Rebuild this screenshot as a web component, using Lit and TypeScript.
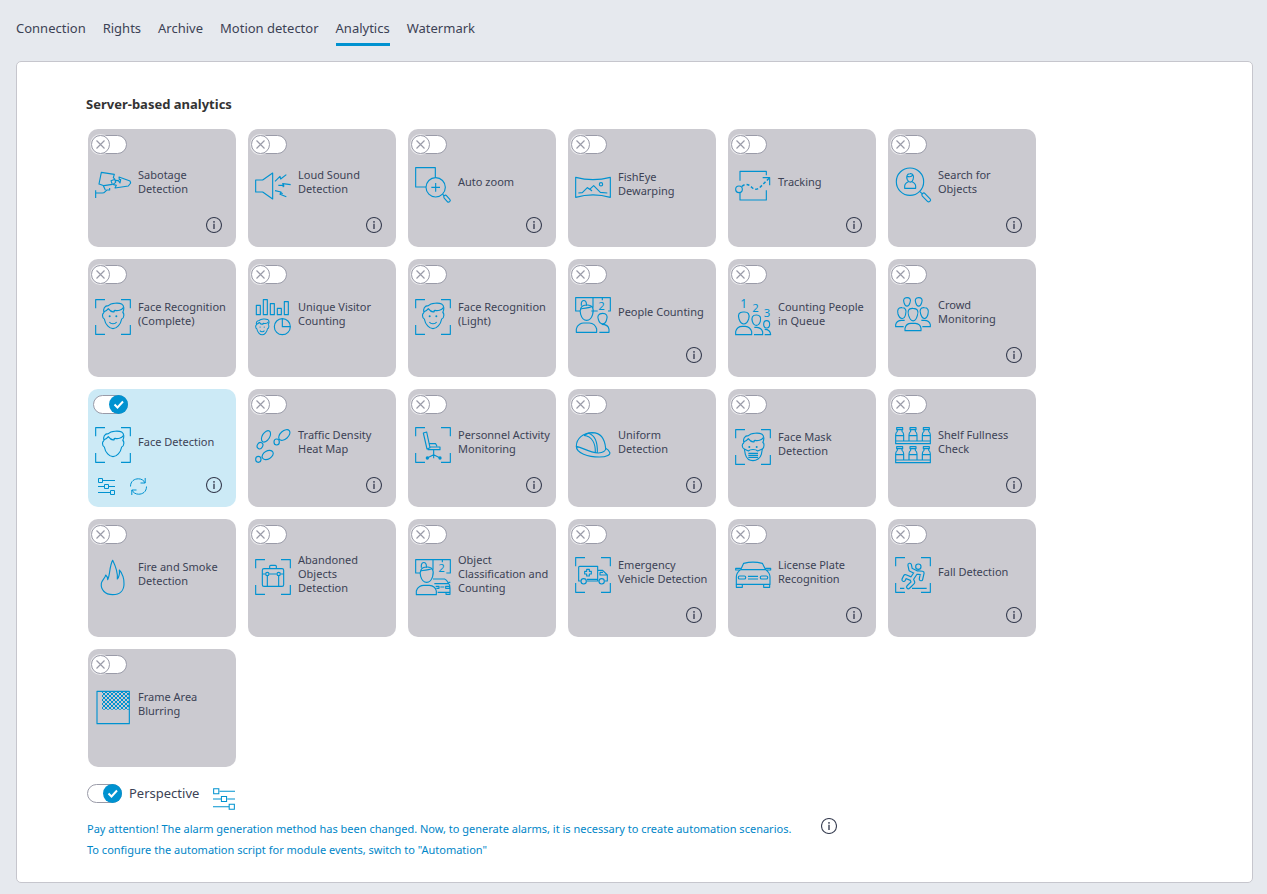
import { LitElement, html, svg, css, nothing } from "lit";
import type { SVGTemplateResult } from "lit";
import { customElement, property, state } from "lit/decorators.js";
import { classMap } from "lit/directives/class-map.js";

type Module = {
  id: string;
  label: string;
  info?: boolean;
  on?: boolean;
};

const TABS = ["Connection", "Rights", "Archive", "Motion detector", "Analytics", "Watermark"];

const MODULES: Module[] = [
  { id: "sabotage", label: "Sabotage\nDetection", info: true },
  { id: "sound", label: "Loud Sound\nDetection", info: true },
  { id: "zoom", label: "Auto zoom", info: true },
  { id: "fisheye", label: "FishEye\nDewarping" },
  { id: "tracking", label: "Tracking", info: true },
  { id: "search", label: "Search for\nObjects", info: true },
  { id: "face", label: "Face Recognition\n(Complete)" },
  { id: "visitor", label: "Unique Visitor\nCounting" },
  { id: "face", label: "Face Recognition\n(Light)" },
  { id: "people", label: "People Counting", info: true },
  { id: "queue", label: "Counting People\nin Queue" },
  { id: "crowd", label: "Crowd\nMonitoring", info: true },
  { id: "head", label: "Face Detection", info: true, on: true },
  { id: "traffic", label: "Traffic Density\nHeat Map", info: true },
  { id: "chair", label: "Personnel Activity\nMonitoring", info: true },
  { id: "helmet", label: "Uniform\nDetection", info: true },
  { id: "mask", label: "Face Mask\nDetection" },
  { id: "shelf", label: "Shelf Fullness\nCheck", info: true },
  { id: "fire", label: "Fire and Smoke\nDetection" },
  { id: "bag", label: "Abandoned\nObjects\nDetection" },
  { id: "objects", label: "Object\nClassification and\nCounting" },
  { id: "ambulance", label: "Emergency\nVehicle Detection", info: true },
  { id: "car", label: "License Plate\nRecognition", info: true },
  { id: "fall", label: "Fall Detection", info: true },
  { id: "blur", label: "Frame Area\nBlurring" },
];

const brackets = svg`<path d="M2 28V2H30M78 2H106V28M106 78V106H78M30 106H2V78"/>`;

const hairShape = svg`
  <path d="M27 42C23 30 29 20 40 20C48 11 72 11 80 15C88 20 88 32 83 41"/>
  <path d="M27 38C33 36 37 33 40 29C45 36 52 40 58 38C56 36 57 34 60 34C68 36 80 34 85 26"/>`;

const headShape = svg`${hairShape}
  <path d="M27 42C21 42 21 58 28 60C31 77 43 89 54 89C65 89 77 77 80 60C88 58 88 42 83 41"/>`;

const faceShape = svg`${headShape}
  <circle class="dot" cx="44" cy="52" r="3"/><circle class="dot" cx="64" cy="52" r="3"/>
  <path d="M43 69C48 76 60 76 65 69"/>`;

const bottle = (x: number, y: number) => svg`<g transform="translate(${x} ${y})">
  <path d="M-9 0H9V6H-9ZM-7 6V11C-11 14-12 17-12 22V40M7 6V11C11 14 12 17 12 22V40M-12 24H12"/></g>`;

const GLYPHS: Record<string, SVGTemplateResult> = {
  sabotage: svg`
    <path d="M19 16L58 22L55 32L60 37L48 41L52 52L27 56L12 51Z"/>
    <path d="M72 30L105 42L107 48L100 57L60 63L64 55L54 52L62 46L60 40L70 41L75 48L77 38L73 38Z"/>
    <path d="M2 70V93M2 78H22C30 78 31 71 36 69H44V63M25 56L31 69"/>`,
  sound: svg`
    <path d="M2 39H23L53 18V96L23 75H2ZM53 18V96"/>
    <path d="M60 43L75 28L77 36L94 23M70 55H86L83 50L107 53M83 60L88 56M60 71L78 75L75 82L94 89M75 75L83 80"/>`,
  zoom: svg`
    <path d="M33 60H2V2H61V31"/><circle cx="62" cy="61" r="29"/>
    <path d="M49 61H75M62 48V74M83 82L88 87"/>
    <rect x="84" y="90" width="24" height="10" rx="5" transform="rotate(48 96 95)"/>`,
  fisheye: svg`
    <path d="M2 25Q54 39 106 25V85Q54 70 2 85Z"/>
    <path d="M10 72L22 71L37 56L44 60L51 66M37 56L44 61L56 50L76 70L97 72"/><circle cx="78" cy="46" r="5"/>`,
  tracking: svg`
    <path d="M15 41V13H94V25M15 77V99H94V70"/><circle cx="12" cy="67" r="10"/>
    <path class="bold" d="M21 58C32 48 42 53 50 61C58 69 68 68 76 60L102 34" stroke-dasharray="9 6"/>
    <path d="M83 32H104V55"/>`,
  search: svg`
    <circle cx="45" cy="44" r="41"/>
    <path d="M45 20C34 20 34 31 37 38C42 48 51 48 54 38C58 28 54 19 45 20ZM37 28C44 30 51 28 53 24"/>
    <path d="M40 44C33 47 29 49 29 58V64H62V58C62 49 58 47 51 44M75 74L81 80"/>
    <rect x="78" y="86" width="32" height="11" rx="5" transform="rotate(46 94 91)"/>`,
  face: svg`${brackets}${faceShape}`,
  head: svg`${brackets}${headShape}`,
  visitor: svg`
    <path d="M4 19H16V47H4ZM25 2H37V47H25ZM46 14H58V47H46ZM67 28H79V47H67ZM88 8H100V47H88Z"/>
    <g transform="translate(-12 52) scale(.62)" stroke-width="5">${faceShape}</g>
    <circle cx="82" cy="83" r="24"/><path d="M82 59V83H106"/>`,
  people: svg`
    <path d="M15 42H2V2H106V42H99M54 2V32M82 2V10M19 26V18C21 8 32 8 34 18V26M49 42H68"/>
    <text x="70" y="40" font-size="34">2</text>
    <path d="M35 24C17 24 13 38 17 52C24 76 46 76 53 52C58 34 52 23 35 24Z"/>
    <path d="M17 36C30 32 42 35 52 28"/>
    <path d="M4 106V96C7 82 20 78 26 78H43C56 79 62 86 65 96V106Z"/>
    <path d="M83 49C70 49 66 58 70 67C75 85 91 85 95 67C99 56 94 49 83 49ZM80 82C96 82 101 89 102 97V106H73"/>`,
  queue: svg`
    <text x="16" y="26" font-size="36">1</text><text x="52" y="39" font-size="34">2</text><text x="86" y="55" font-size="34">3</text>
    <path d="M26 39C11 38 8 48 12 60C19 80 34 80 41 60C45 46 40 38 26 39Z"/>
    <path d="M2 107V98C5 85 16 82 22 82H31C43 83 48 90 50 98V107Z"/>
    <path d="M64 48C52 48 49 55 52 67C57 83 71 83 76 67C79 55 75 48 64 48ZM58 85H66C77 86 81 91 83 99V107H57"/>
    <ellipse cx="95" cy="76" rx="9" ry="11"/><path d="M89 91C101 91 106 95 107 107H89"/>`,
  crowd: svg`
    <path d="M36 2C27 2 24 8 27 17C31 31 41 31 45 17C49 6 44 2 36 2ZM71 2C62 2 59 8 62 17C66 31 76 31 80 17C84 6 79 2 71 2Z"/>
    <path d="M21 32C9 31 6 40 9 51C15 70 29 68 32 51C35 40 32 32 21 32ZM88 32C76 31 73 40 77 51C83 70 95 68 99 51C102 40 99 32 88 32Z"/>
    <path d="M54 34C39 33 37 43 41 56C48 77 61 77 67 56C72 41 67 34 54 34Z"/>
    <path d="M26 89H2V83C4 73 14 70 20 70H29M82 89H106V83C104 73 94 70 88 70H79"/>
    <path d="M30 101V94C33 81 42 79 48 79H61C71 80 77 86 78 94V101Z"/>`,
  traffic: svg`
    <ellipse cx="33" cy="28" rx="11" ry="19" transform="rotate(32 33 28)"/><ellipse cx="15" cy="56" rx="8" ry="10" transform="rotate(30 15 56)"/>
    <ellipse cx="88" cy="24" rx="12" ry="20" transform="rotate(48 88 24)"/><ellipse cx="65" cy="45" rx="8" ry="9"/>
    <ellipse cx="38" cy="84" rx="12" ry="18" transform="rotate(60 38 84)"/><ellipse cx="10" cy="97" rx="8" ry="9"/>`,
  chair: svg`${brackets}
    <path d="M25 18L35 15L45 62L36 66ZM43 50H62L66 58M38 68H75V60H44M56 68V83M38 92L56 83L74 92M56 83V94"/>
    <circle class="dot" cx="37" cy="93" r="5"/><circle class="dot" cx="75" cy="93" r="5"/>`,
  helmet: svg`
    <path d="M4 58C4 34 24 18 52 17C75 17 89 34 92 64"/>
    <path d="M4 58C3 78 40 90 73 90C96 90 108 82 104 76C102 70 96 66 92 64C93 72 84 77 70 78C40 76 25 62 4 58Z"/>
    <path d="M27 25C50 28 62 48 61 77M41 19C60 25 68 46 67 77M41 19L27 25"/>`,
  mask: svg`${brackets}${hairShape}
    <path d="M27 42C19 44 21 58 28 60L31 76C35 90 46 95 54 95C64 95 76 88 79 76L82 60C89 56 88 41 83 41"/>
    <circle class="dot" cx="43" cy="54" r="3"/><circle class="dot" cx="65" cy="54" r="3"/>
    <path d="M28 60L40 66C46 60 62 60 68 66L82 60M40 73H69M40 79H69M40 85H69"/>`,
  shelf: svg`
    <path d="M2 42H106V50H2ZM2 99H106V107H2Z"/>
    ${bottle(14, 2)}${bottle(54, 2)}${bottle(94, 2)}${bottle(14, 59)}${bottle(54, 59)}${bottle(94, 59)}`,
  fire: svg`
    <path d="M53 107C29 107 17 91 19 73C22 61 30 58 32 48Q39 54 38 62C45 52 43 20 53 4C62 22 69 38 67 60Q75 50 73 33C83 43 88 62 87 75C87 93 76 107 53 107Z"/>`,
  bag: svg`${brackets}
    <rect x="22" y="29" width="64" height="53" rx="5"/>
    <path d="M44 29V22Q44 19 47 19H61Q64 19 64 22V29M22 45H31M43 45H65M77 45H86M37 51V82M71 51V82"/>
    <circle cx="37" cy="45" r="5"/><circle cx="71" cy="45" r="5"/>`,
  objects: svg`
    <path d="M15 42H2V2H106V42H94M54 2V32M82 2V10M19 26V18C21 8 32 8 34 18V26"/>
    <text x="70" y="40" font-size="34">2</text>
    <path d="M35 24C17 24 13 38 17 52C24 76 46 76 53 52C58 34 52 23 35 24ZM17 36C30 32 42 35 52 28"/>
    <path d="M4 107V96C7 83 20 79 26 79H43C56 80 62 87 64 96V107Z"/>
    <path d="M54 60H89C96 62 98 68 101 74H58M101 70H106M101 74C105 77 105 82 105 88V100H68M62 82H72V88H64M92 82H104V88H92ZM76 84H88M93 100V106H105V98"/>`,
  ambulance: svg`${brackets}
    <path d="M17 72H11V31Q11 28 14 28H68V72H36M68 40H83L97 54V72H90M71 72H68M75 46V54H96M75 46H84M36 67H68"/>
    <path d="M35 37H43V43H49V51H43V57H35V51H29V43H35Z"/>
    <circle cx="26" cy="73" r="8"/><circle cx="80" cy="73" r="8"/>`,
  car: svg`
    <path d="M17 38L26 19Q54 12 82 19L92 38ZM17 34H2V39H15M92 34H107V39H93M17 38C6 46 4 52 4 60V82H105V60C105 52 102 46 92 38"/>
    <path d="M4 82V91H22V82M86 82V91H104V82M39 58H69M39 66H69"/>
    <rect x="10" y="57" width="22" height="9" rx="4"/><rect x="76" y="57" width="22" height="9" rx="4"/>`,
  fall: svg`${brackets}
    <path d="M15 94H28M51 94H95"/>
    <g class="limbs"><path d="M44 24L47 38L64 46L82 48L78 66M62 48L50 66L31 58L26 68M50 66L54 76L40 90"/></g>
    <g class="limbs-in"><path d="M44 24L47 38L64 46L82 48L78 66M62 48L50 66L31 58L26 68M50 66L54 76L40 90"/></g>
    <circle class="skin" cx="70" cy="29" r="8"/>`,
  blur: svg`
    <defs><pattern id="checks" width="12" height="12" patternUnits="userSpaceOnUse">
      <path class="dot" d="M0 0H6V6H0ZM6 6H12V12H6Z"/></pattern></defs>
    <rect x="6" y="7" width="97" height="97"/>
    <rect class="checker" x="21" y="8" width="81" height="54" fill="url(#checks)"/>`,
};

const slidersGlyph = svg`
  <path d="M5 2.500H17M0 8.500H6.500M11 8.500H17M0 14.500H12.500"/>
  <path d="M.5 .5H4.500V4.500H.5ZM6.500 6.500H10.500V10.500H6.500ZM12.500 12.500H16.500V16.500H12.500Z"/>`;

@customElement("module-icon")
class ModuleIcon extends LitElement {
  @property() name = "";

  static styles = css`
    :host { display: block; flex: none; width: 36px; height: 36px; }
    svg {
      display: block; width: 36px; height: 36px; overflow: visible; fill: none;
      stroke: #0092d0; stroke-width: 3.4; stroke-linejoin: round;
    }
    text { font-family: "Noto Sans", sans-serif; fill: #0092d0; stroke: none; }
    .dot { fill: #0092d0; stroke: none; }
    .bold { stroke-width: 4.5; }
    .checker { stroke: none; }
    .limbs { stroke-width: 14; stroke-linecap: round; }
    .limbs-in { stroke: #cbcad0; stroke-width: 7; stroke-linecap: round; }
    .skin { fill: #cbcad0; }
  `;

  render() {
    return html`<svg viewBox="0 0 108 108" aria-hidden="true">${GLYPHS[this.name]}</svg>`;
  }
}

@customElement("info-button")
class InfoButton extends LitElement {
  @property() label = "";

  static styles = css`
    :host { display: block; width: 16px; height: 16px; }
    button { display: block; margin: 0; padding: 0; border: 0; background: none; cursor: pointer; }
    svg { display: block; width: 16px; height: 16px; fill: none; stroke: #3c4255; stroke-width: 1.1; }
  `;

  render() {
    return html`<button type="button" aria-label=${`About ${this.label}`}>
      <svg viewBox="0 0 16 16" aria-hidden="true">
        <circle cx="8" cy="8" r="7.500" /><path d="M8 4V5.700M8 6.800V12" stroke-width="1.400" />
      </svg>
    </button>`;
  }
}

@customElement("toggle-switch")
class ToggleSwitch extends LitElement {
  @property({ type: Boolean }) on = false;
  @property() label = "";

  static styles = css`
    :host { display: block; width: 36px; height: 21px; }
    label { display: block; position: relative; cursor: pointer; }
    input { position: absolute; inset: 0; margin: 0; width: 100%; height: 100%; opacity: 0; cursor: pointer; }
    svg { display: block; width: 36px; height: 21px; overflow: visible; fill: none; }
    .track { fill: #fff; stroke: #9a9ba8; }
    .halo { fill: #fff; stroke: #fff; stroke-width: 3; stroke-opacity: 0.6; }
    .thumb { fill: #fff; stroke: #9a9ba8; }
    .cross { stroke: #9a9ba8; stroke-width: 1.2; }
    .thumb-on { fill: #0092d0; }
    .check { stroke: #fff; stroke-width: 2; }
  `;

  private change(e: Event) {
    this.on = (e.target as HTMLInputElement).checked;
    this.dispatchEvent(new CustomEvent("toggle", { detail: this.on }));
  }

  render() {
    return html`<label>
      <input type="checkbox" aria-label=${this.label} .checked=${this.on} @change=${this.change} />
      <svg viewBox="0 0 36 21" aria-hidden="true">
        ${this.on
          ? svg`<rect class="track" x=".5" y="1.500" width="34" height="18" rx="9"/>
              <circle class="thumb-on" cx="25.500" cy="10.500" r="9.500"/>
              <path class="check" d="M21.500 10.500L24.500 13.500L30 7.500"/>`
          : svg`<rect class="track" x="3" y="1.500" width="32.500" height="18" rx="9"/>
              <circle class="halo" cx="9.500" cy="10.500" r="9"/>
              <circle class="thumb" cx="9.500" cy="10.500" r="9"/>
              <path class="cross" d="M5.500 6.500L13.500 14.500M13.500 6.500L5.500 14.500"/>`}
      </svg>
    </label>`;
  }
}

@customElement("module-card")
class ModuleCard extends LitElement {
  @property({ attribute: false }) module!: Module;
  @state() private on = false;

  static styles = css`
    .card {
      box-sizing: border-box; display: flex; flex-direction: column; min-height: 118px;
      padding: 5px 0 14px; border-radius: 10px; background: #cbcad0;
    }
    .card.on { background: #cceaf6; }
    .switch { height: 23px; padding-left: 3px; }
    .on .switch { padding-left: 5px; }
    .body { display: flex; align-items: center; gap: 7px; min-height: 60px; padding-left: 7px; }
    .with-info .body { min-height: 56px; }
    .name {
      padding-bottom: 6px; white-space: pre; color: #3c4255;
      font-size: 11px; line-height: 14px;
    }
    .footer {
      display: flex; align-items: flex-start; gap: 15px; height: 16px;
      margin-top: auto; padding: 0 14px 0 10px;
    }
    .footer info-button { margin-left: auto; }
    .tool { margin: 0; padding: 1px 0 0; border: 0; background: none; cursor: pointer; }
    .tool svg { display: block; width: 17px; height: 17px; fill: none; stroke: #0092d0; overflow: visible; }
  `;

  willUpdate(changed: Map<string, unknown>) {
    if (changed.has("module")) this.on = !!this.module.on;
  }

  render() {
    const { id, label, info } = this.module;
    const title = label.replaceAll("\n", " ");
    return html`<section class=${classMap({ card: true, on: this.on, "with-info": !!info })}>
      <div class="switch">
        <toggle-switch .on=${this.on} .label=${title} @toggle=${(e: CustomEvent) => (this.on = e.detail)}></toggle-switch>
      </div>
      <div class="body"><module-icon name=${id}></module-icon><span class="name">${label}</span></div>
      ${info || this.on
        ? html`<div class="footer">
            ${this.on
              ? html`<button class="tool" type="button" aria-label="Settings">
                    <svg viewBox="0 0 17 17" aria-hidden="true">${slidersGlyph}</svg>
                  </button>
                  <button class="tool" type="button" aria-label="Reload">
                    <svg viewBox="0 0 17 17" aria-hidden="true">
                      <path d="M.5 8.500C.5 3 4.500 .8 8.500 .8C11.500 .8 14 2.500 15 5M15.200 0V5H10.500M16.500 8.500C16.500 14 12.500 16.200 8.500 16.200C5.500 16.200 3 14.500 2 12M1.800 17V12H6.500" />
                    </svg>
                  </button>`
              : nothing}
            ${info ? html`<info-button .label=${title}></info-button>` : nothing}
          </div>`
        : nothing}
    </section>`;
  }
}

@customElement("app-root")
class AppRoot extends LitElement {
  @state() private tab = "Analytics";

  static styles = css`
    :host {
      box-sizing: border-box; display: flex; flex-direction: column; min-height: 100vh;
      padding: 19px 14px 11px 16px; background: #e6e9ee; color: #3c4255;
      font-family: "Noto Sans", "Open Sans", sans-serif;
    }
    .tabs { display: flex; gap: 17px; }
    .tab {
      padding-bottom: 6px; border-bottom: 3px solid transparent; color: inherit;
      font-size: 13px; line-height: 18px; text-decoration: none;
    }
    .tab.active { border-color: #0092d0; }
    .panel {
      box-sizing: border-box; flex: 1; margin-top: 15px; padding: 33px 69px 22px;
      border: 1px solid #c6c6cd; border-radius: 5px; background: #fff;
    }
    h1 { margin: 0 0 15px; color: #333; font-size: 13px; line-height: 19px; font-weight: 700; }
    .grid {
      display: grid; grid-template-columns: repeat(auto-fill, 148px); gap: 12px;
      max-width: 960px; padding-left: 2px;
    }
    .perspective {
      display: flex; align-items: flex-start; gap: 6px; margin-top: 16px; padding-left: 1px;
      font-size: 13px; line-height: 21px;
    }
    .sliders { margin: 0 0 0 8px; padding: 5px 0 0; border: 0; background: none; cursor: pointer; }
    .sliders svg {
      display: block; width: 22px; height: 22px; fill: none; stroke: #0092d0; stroke-width: 0.8; overflow: visible;
    }
    .notice { display: flex; align-items: flex-start; gap: 30px; margin-top: 8px; padding-left: 1px; }
    .notice p { margin: 0; color: #0086c8; font-size: 11px; line-height: 21px; }
  `;

  render() {
    return html`
      <nav class="tabs" aria-label="Camera settings">
        ${TABS.map(
          (t) => html`<a
            href="#"
            class=${classMap({ tab: true, active: t === this.tab })}
            @click=${(e: Event) => {
              e.preventDefault();
              this.tab = t;
            }}
            >${t}</a
          >`
        )}
      </nav>
      <main class="panel">
        <h1>Server-based analytics</h1>
        <div class="grid">${MODULES.map((m) => html`<module-card .module=${m}></module-card>`)}</div>
        <div class="perspective">
          <toggle-switch .on=${true} label="Perspective"></toggle-switch>
          <span>Perspective</span>
          <button class="sliders" type="button" aria-label="Perspective settings">
            <svg viewBox="0 0 17 17" aria-hidden="true">${slidersGlyph}</svg>
          </button>
        </div>
        <div class="notice">
          <p>
            Pay attention! The alarm generation method has been changed. Now, to generate alarms, it is necessary to
            create automation scenarios.<br />To configure the automation script for module events, switch to
            "Automation"
          </p>
          <info-button label="alarm generation"></info-button>
        </div>
      </main>
    `;
  }
}
